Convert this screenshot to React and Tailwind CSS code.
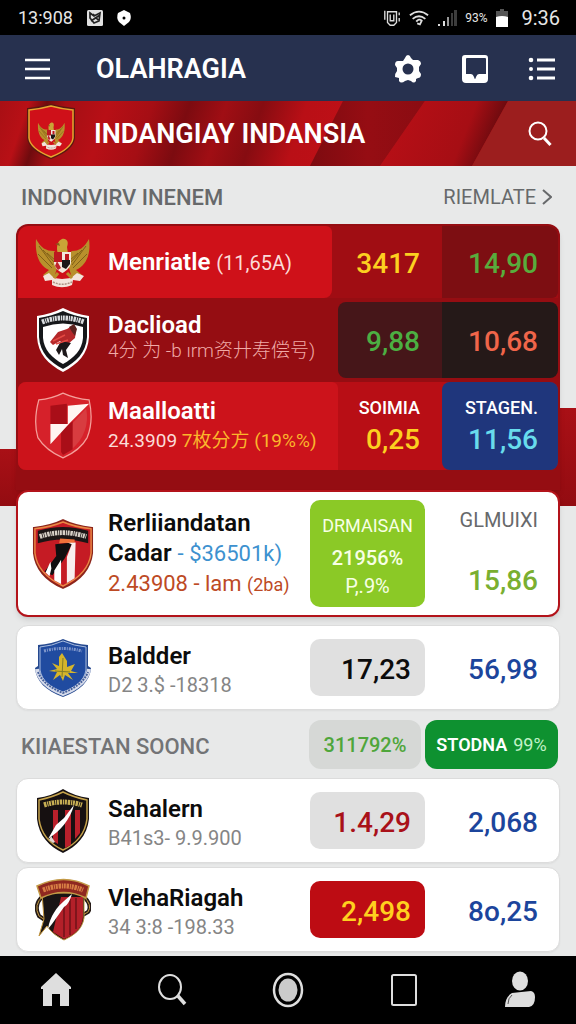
import React from 'react';

function ShieldBand({ d, color }) {
  return <path d={d} fill="none" stroke={color} strokeWidth="5" strokeDasharray="2.500 .8 1.200 .7 2 .8" />;
}

function Garuda() {
  return (
    <g>
      <path d="M2 3C1 17 4 29 15 34L9 39 20 42 23 32 35 32 38 42 48 39 42 34C53 29 57 17 55 3 50 12 45 15 38 15L34 18 24 18 20 15C12 15 7 12 2 3Z" fill="#b8902c" />
      <path d="M5 10L19 29M9 14L21 27M13 17L22 25M4 18L18 32M52 10L38 29M48 14L36 27M44 17L35 25M53 18L39 32" stroke="#806018" strokeWidth="1" fill="none" />
      <path d="M24 18C22 12 23 5 28 3 33 2 35 6 33 11L34 18Z" fill="#c9a437" />
      <path d="M25 7L21 8 26 10Z" fill="#82611d" />
      <path d="M20 16H37V27C36 32 32 35 28.500 37 24 35 21 32 20 27Z" fill="#f2e8dc" />
      <path d="M20 16H28V26H20ZM31 18H35V24H31Z" fill="#bd1820" />
      <path d="M28 24H36V28L32 33 28 31Z" fill="#1b1717" />
      <path d="M23 25L27 32 24 34 21 30Z" fill="#be242a" />
      <path d="M9 40L15 37 20 42 28 43 37 42 43 37 50 40 46 45 39 44 38 49C31 52 25 52 18 49L18 44 11 45Z" fill="#f3e4db" />
      <path d="M19 46C25 49 32 49 38 46" stroke="#ac9284" strokeWidth="1.500" fill="none" strokeDasharray="2 1" />
      <path d="M24 37L20 42M33 37L38 42" stroke="#b8902c" strokeWidth="3" />
    </g>
  );
}

function GarudaLogo() {
  return <svg viewBox="0 0 58 52" className="h-[52px] w-[58px]" aria-hidden="true"><Garuda /></svg>;
}

function BannerCrest() {
  return (
    <svg viewBox="0 0 50 56" className="mb-1 h-14 w-[50px]" aria-hidden="true">
      <path d="M2 5Q14 4 25 1 36 4 48 5V34C47 44 36 50 25 54 14 50 3 44 2 34Z" fill="#cf1019" stroke="#5a1810" strokeWidth="2" />
      <path d="M3 6Q14 5 25 2 36 5 47 6V34C46 43 35 49 25 53 15 49 4 43 3 34Z" fill="none" stroke="#e6a62f" strokeWidth="1.500" />
      <g transform="translate(11 17) scale(.5 .56)"><Garuda /></g>
    </svg>
  );
}

function EagleShield() {
  return (
    <svg viewBox="0 0 54 66" preserveAspectRatio="none" className="h-[66px] w-[54px]" aria-hidden="true">
      <path d="M1 9Q15 7 27 1 39 7 53 9V30C52 47 42 57 27 65 12 57 2 47 1 30Z" fill="#fff" />
      <path d="M3 11Q16 9 27 4 38 9 51 11V30C50 46 40 55 27 62 14 55 4 46 3 30Z" fill="#15171a" />
      <path d="M7 20Q27 13 47 20V31C46 43 38 51 27 57 16 51 8 43 7 31Z" fill="#fff" />
      <ShieldBand d="M6 15Q27 7 48 15" color="#d9dcdf" />
      <path d="M14 35L22 25 31 22 36 19 40 23 39 31 32 37 24 34 17 38Z" fill="#b5282a" />
      <path d="M33 20L38 17 41 22 39 29 36 25Z" fill="#5d2320" />
      <path d="M25 34L35 36 30 43 32 51 27 48 26 42 23 48 20 43Z" fill="#1c1719" />
      <path d="M17 34L29 28M20 37L32 33" stroke="#e44a43" strokeWidth="1.500" />
    </svg>
  );
}

function CheckShield() {
  return (
    <svg viewBox="0 0 60 70" className="h-[70px] w-[60px]" aria-hidden="true">
      <path d="M5 8Q18 7 30 1 43 7 57 8 62 30 55 47 48 60 30 68 12 60 4 47-1 30 5 8Z" fill="#d6212a" stroke="#f4a09b" strokeWidth="1.300" />
      <path d="M38 34L54 17C57 33 52 49 38 60Z" fill="#d83c40" />
      <path d="M28 40L40 30V59L30 65 28 62Z" fill="#a90e18" />
      <path d="M17 14L34 12V33H17Z" fill="#a90e18" />
      <path d="M35 14L57 12 37 32 17 54V33H35Z" fill="#fff5f2" />
    </svg>
  );
}

function StripeShield() {
  return (
    <svg viewBox="0 0 64 74" className="h-[74px] w-16" aria-hidden="true">
      <path d="M2 10Q20 8 32 2 44 8 62 10V36C60 54 48 65 32 72 16 65 4 54 2 36Z" fill="#c51b24" stroke="#8c251b" strokeWidth="2" />
      <path d="M3 11Q20 9 32 4 44 9 61 11V36C59 53 47 63 32 70 17 63 5 53 3 36Z" fill="none" stroke="#e98945" strokeWidth="1.500" />
      <path d="M6 13Q32 5 58 13V26Q32 18 6 26Z" fill="#1b1515" />
      <ShieldBand d="M8 19Q32 11 56 19" color="#d8d1c8" />
      <path d="M24 27L42 25 34 41 21 59 13 55 25 39Z" fill="#100f10" />
      <path d="M34 24L45 25 44 62 36 67V40L41 27Z" fill="#f8eeee" />
      <path d="M30 43V68L23 64V54ZM19 45L14 56 18 60 20 52Z" fill="#fff" />
      <path d="M29 21L44 22 44 25 28 26Z" fill="#ef713a" />
    </svg>
  );
}

function BlueCrest() {
  return (
    <svg viewBox="0 0 58 60" className="h-[60px] w-[58px]" aria-hidden="true">
      <path d="M4 7Q18 6 29 1 40 6 54 7V28L57 30C56 43 46 53 29 59 12 53 2 43 1 30L4 28Z" fill="#24488f" />
      <path d="M6 9Q18 8 29 3 40 8 52 9V32C50 43 42 49 29 54 16 49 8 43 6 32Z" fill="#204ba0" stroke="#a9bde0" strokeWidth="1" />
      <path d="M3 31C5 44 16 51 29 56 42 51 53 44 55 31" fill="none" stroke="#d7dceb" strokeWidth="4" />
      <path d="M4 34C8 44 17 50 29 55 41 50 50 44 54 34" fill="none" stroke="#47619b" strokeWidth="2" strokeDasharray="2 1" />
      <path d="M10 13Q29 8 48 13" fill="none" stroke="#8097cb" strokeWidth="3" strokeDasharray="2 1 1 1" />
      <path d="M28 15L33 23 33 29 41 26 37 33 44 35 34 35 39 42 31 37 29 43 26 37 19 42 23 34 15 33 23 31 18 25 25 28 25 19Z" fill="#d5b52b" />
      <path d="M29 20L28 39M21 33L36 34" stroke="#817c28" strokeWidth="1" />
    </svg>
  );
}

function DarkShield() {
  return (
    <svg viewBox="0 0 54 66" preserveAspectRatio="none" className="h-[66px] w-[54px]" aria-hidden="true">
      <path d="M1 10Q16 8 27 1 38 8 53 10V31C51 48 41 58 27 65 13 58 3 48 1 31Z" fill="#171112" />
      <path d="M3 12Q17 9 27 4 37 9 51 12V31C49 46 40 56 27 62 14 56 5 46 3 31Z" fill="#161011" stroke="#c5a34b" strokeWidth="1.500" />
      <path d="M17 22H22V56L17 53ZM29 22H35V57L29 60ZM39 22H44V45L39 51Z" fill="#b9202b" />
      <ShieldBand d="M8 17Q27 11 46 17" color="#c7ae54" />
      <path d="M38 17C34 32 24 43 12 51L20 37 28 30Z" fill="#fff" />
      <path d="M15 48L19 54 17 55 13 52Z" fill="#e4d9d2" />
    </svg>
  );
}

function RibbonShield() {
  return (
    <svg viewBox="0 0 56 64" className="h-16 w-14" aria-hidden="true">
      <path d="M8 18Q-2 27 4 38L10 42M48 18Q58 27 53 34L46 38" fill="none" stroke="#251b17" strokeWidth="4" />
      <path d="M8 18Q-2 27 4 38L10 42M48 18Q58 27 53 34L46 38" fill="none" stroke="#c49a43" strokeWidth="1" />
      <path d="M7 15H49V40C47 52 39 57 29 62 21 58 15 53 12 48L4 58 9 41Z" fill="#191414" stroke="#c1933c" strokeWidth="1" />
      <path d="M26 19H48V39C47 51 39 57 29 61L18 54Z" fill="#b42029" />
      <path d="M29 24V59M35 21V57M41 20V51" stroke="#80151c" strokeWidth="2" />
      <path d="M2 8Q29-5 54 8L51 20Q29 9 6 20Z" fill="#8f2820" stroke="#c39a47" strokeWidth="1.500" />
      <ShieldBand d="M8 12Q29 4 48 12" color="#d77e44" />
      <path d="M37 16C35 22 33 27 29 29L17 46 13 51C15 38 22 29 29 23Z" fill="#fff" />
    </svg>
  );
}

function StatusBar() {
  return (
    <div className="flex h-[35px] items-center justify-between bg-black pr-4 pl-[18px] text-[#e6e6e6]">
      <div className="flex items-center gap-3">
        <span className="w-14 text-lg leading-6">13:908</span>
        <svg viewBox="0 0 18 18" className="size-[18px]" aria-hidden="true">
          <rect x="1" y="1" width="16" height="16" rx="1.500" fill="#e1e1e1" />
          <path d="M4 4L8 7 14 4 13 12 8 14 4 9ZM7 5L12 11M5 12L14 6" fill="none" stroke="#222" strokeWidth="1.700" />
        </svg>
        <svg viewBox="0 0 16 18" className="h-[18px] w-4" aria-hidden="true">
          <path d="M8 1L14 4Q16 10 13 13L8 17 3 13Q0 9 2 4Z" fill="#fff" /><circle cx="8" cy="9" r="1.500" />
        </svg>
      </div>
      <div className="flex items-center gap-2">
        <svg viewBox="0 0 20 20" className="size-[18px]" fill="none" stroke="#ddd" strokeWidth="1.500" aria-hidden="true">
          <path d="M2 2V12M5 3H15V15L12 18H8L5 15ZM8 6V13H12V6M18 4V7M18 10V14" />
        </svg>
        <svg viewBox="0 0 22 18" className="h-[18px] w-5" fill="none" stroke="#ddd" strokeWidth="2" aria-hidden="true">
          <path d="M1 6Q11-2 21 6M4 10Q11 4 18 10M8 13Q11 9 14 12L12 16 9 15" />
        </svg>
        <svg viewBox="0 0 20 18" className="h-[18px] w-5" aria-hidden="true">
          <path d="M1 15H3V17H1ZM6 12H8V17H6Z" fill="#ddd" /><path d="M10 8H12V17H10Z" fill="#999" /><path d="M14 4H16V17H14ZM17 1H20V17H17Z" fill="#3d3d3d" />
        </svg>
        <span className="text-xs">93%</span>
        <svg viewBox="0 0 14 20" className="h-5 w-3.5" aria-hidden="true">
          <path d="M5 1H9V3H13V10H1V3H5Z" fill="#555" /><path d="M1 9Q7 7 13 9V19H1Z" fill="#fff" />
        </svg>
        <span className="ml-1 text-xl leading-6">9:36</span>
      </div>
    </div>
  );
}

function AppHeader() {
  return (
    <header className="flex h-[66px] items-center bg-[#27314f] pt-0.5 pr-5 pl-6 text-white">
      <button aria-label="Menu" className="w-[72px]">
        <svg viewBox="0 0 26 22" className="h-[22px] w-[26px]" stroke="currentColor" strokeWidth="2.600" aria-hidden="true"><path d="M1 2H26M1 11H26M1 20H26" /></svg>
      </button>
      <h1 className="flex-1 text-[27px] leading-8 font-semibold">OLAHRAGIA</h1>
      <div className="flex items-center gap-[39px]">
        <button aria-label="Pengaturan">
          <svg viewBox="0 0 28 30" className="h-[30px] w-7" aria-hidden="true">
            <path fillRule="evenodd" fill="currentColor" d="M14 1Q16 1 17 4L19 6H24Q27 7 27 10L25 13V17L27 20Q27 24 24 24L22 25V27Q20 30 17 27L14 26 11 27Q7 30 5 27V24L1 23Q1 19 3 17V14L1 11Q1 7 4 7H9L11 4Q12 1 14 1ZM14 9.500A5.500 5.500 0 1 0 14 20.500 5.500 5.500 0 1 0 14 9.500Z" />
          </svg>
        </button>
        <button aria-label="Kotak masuk">
          <svg viewBox="0 0 28 30" className="h-[30px] w-7" aria-hidden="true">
            <path fillRule="evenodd" fill="currentColor" d="M4 1H24Q27 1 27 4V25Q27 29 23 29H5Q1 29 1 25V4Q1 1 4 1ZM6 4Q5 4 5 5V20H10Q12 20 13 23 14 27 15 23 16 20 18 20H25V5Q25 4 24 4Z" />
          </svg>
        </button>
        <button aria-label="Daftar">
          <svg viewBox="0 0 28 24" className="h-6 w-7" fill="currentColor" aria-hidden="true">
            <circle cx="3" cy="3" r="2.300" /><circle cx="3" cy="12" r="2" /><circle cx="3" cy="21" r="2.300" /><path d="M9 1.500H27V4.500H9ZM9 10.500H27V13.500H9ZM9 19.500H27V22.500H9Z" />
          </svg>
        </button>
      </div>
    </header>
  );
}

function Banner() {
  return (
    <section className="relative h-[65px] overflow-hidden bg-[#a90f14] text-white">
      <svg viewBox="0 0 576 65" preserveAspectRatio="none" className="absolute inset-0 size-full" aria-hidden="true">
        <defs>
          <linearGradient id="cloth" gradientUnits="userSpaceOnUse" x1="0" y1="0" x2="330" y2="110">
            <stop stopColor="#a80f14" /><stop offset=".08" stopColor="#b81016" /><stop offset=".13" stopColor="#6f0b0e" /><stop offset=".18" stopColor="#a30f14" />
            <stop offset=".3" stopColor="#b80f16" /><stop offset=".42" stopColor="#a50e14" /><stop offset=".52" stopColor="#7c0b10" /><stop offset=".62" stopColor="#a00e14" />
            <stop offset=".72" stopColor="#860c11" /><stop offset=".84" stopColor="#b90f16" /><stop offset="1" stopColor="#c01017" />
          </linearGradient>
          <linearGradient id="fold"><stop stopColor="#7d0b10" /><stop offset=".5" stopColor="#960d13" /><stop offset="1" stopColor="#8a0c12" /></linearGradient>
          <linearGradient id="glow" gradientUnits="userSpaceOnUse" x1="390" y1="0" x2="495" y2="42"><stop stopColor="#b90f16" /><stop offset=".72" stopColor="#a60e14" /><stop offset="1" stopColor="#650a0e" /></linearGradient>
        </defs>
        <path d="M0 0H343L310 65H0Z" fill="url(#cloth)" />
        <path d="M343 0H425L380 65H310Z" fill="url(#fold)" />
        <path d="M425 0H508L472 65H380Z" fill="url(#glow)" />
        <path d="M508 0H576V65H472Z" fill="#9c1e1e" />
      </svg>
      <div className="relative flex h-full items-center pr-6 pl-[26px]">
        <BannerCrest />
        <h2 className="ml-[18px] flex-1 text-[27px] leading-8 font-semibold whitespace-nowrap">INDANGIAY INDANSIA</h2>
        <button aria-label="Cari">
          <svg viewBox="0 0 24 26" className="h-[26px] w-6" fill="none" stroke="currentColor" aria-hidden="true"><circle cx="10" cy="10" r="8.500" strokeWidth="2" /><path d="M16 17L22.500 24" strokeWidth="3" /></svg>
        </button>
      </div>
    </section>
  );
}

const rowText = 'min-w-0 flex-1 whitespace-nowrap';
const logoBox = 'flex w-[58px] shrink-0 items-center justify-center';
const redRow = 'grid grid-cols-[minmax(0,1fr)_104px_116px]';
const redCell = 'flex items-center justify-end pt-1 text-[28px] font-medium';

function RedBoard() {
  return (
    <ul className="flex flex-col gap-1 rounded-t-xl bg-[#950d12] px-0.5 pt-0.5 pb-5 text-white shadow-md">
      <li className={`${redRow} h-[72px] rounded-t-[10px] bg-[#a00d13]`}>
        <div className="mr-1.5 flex items-center gap-4 rounded-tl-[10px] rounded-tr-md rounded-br-lg bg-[#cf1119] pl-4">
          <div className={logoBox}><GarudaLogo /></div>
          <p className={`${rowText} text-2xl font-semibold`}>Menriatle <span className="text-xl font-normal text-[#fbdcd8]">(11,65A)</span></p>
        </div>
        <div className={`${redCell} pr-[22px] text-[#fcd020]`}>3417</div>
        <div className={`${redCell} rounded-tr-[10px] rounded-br-md bg-[#7d0e12] pr-5 text-[#58ac3c]`}>14,90</div>
      </li>
      <li className={`${redRow} h-[76px]`}>
        <div className="flex items-center gap-4 pl-4">
          <div className={logoBox}><EagleShield /></div>
          <div className={`${rowText} pb-1.5`}>
            <p className="text-2xl leading-7 font-semibold">Daclioad</p>
            <p className="text-[19px] leading-6 font-light text-[#f0aaa7]">4分 为 -b ırm资廾寿偿号)</p>
          </div>
        </div>
        <div className={`${redCell} rounded-l-lg bg-[#461619] pr-[22px] text-[#4caf42]`}>9,88</div>
        <div className={`${redCell} rounded-r-lg bg-[#251918] pr-5 text-[#f0654a]`}>10,68</div>
      </li>
      <li className={`${redRow} h-[88px] rounded-lg bg-[#b80e15]`}>
        <div className="flex items-center gap-4 rounded-l-lg rounded-tr-md bg-[#cc131b] pl-4">
          <div className={logoBox}><CheckShield /></div>
          <div className={rowText}>
            <p className="text-2xl leading-[30px] font-semibold">Maalloatti</p>
            <p className="text-[19px] leading-[30px] text-[#fbdcd8]">24.3909 <span className="text-[#fbb62b]">7枚分方 (19%%)</span></p>
          </div>
        </div>
        <div className="flex flex-col items-end justify-center pr-[22px]">
          <span className="text-lg leading-7 font-medium">SOIMIA</span>
          <span className="text-[28px] leading-9 font-medium text-[#fcd020]">0,25</span>
        </div>
        <div className="flex flex-col items-end justify-center rounded-lg bg-[#1f367c] pr-5">
          <span className="text-lg leading-7 font-medium">STAGEN.</span>
          <span className="text-[28px] leading-9 font-medium text-[#68dcec]">11,56</span>
        </div>
      </li>
    </ul>
  );
}

function FeaturedCard() {
  return (
    <article className="flex h-[127px] rounded-xl border-2 border-[#b3131a] bg-white pr-5 pl-3.5 shadow-md">
      <div className="flex min-w-0 flex-1 items-center gap-3.5">
        <div className="flex w-[62px] shrink-0 justify-center"><StripeShield /></div>
        <div className={rowText}>
          <p className="text-2xl leading-[30px] font-semibold text-[#0c0c0c]">Rerliiandatan</p>
          <p className="text-2xl leading-[30px] font-semibold text-[#0c0c0c]">Cadar <span className="text-[22px] font-normal text-[#3d91cf]">- $36501k)</span></p>
          <p className="text-[22px] leading-[30px] text-[#bd4a24]">2.43908 - lam <span className="text-lg">(2ba)</span></p>
        </div>
      </div>
      <div className="my-2 flex w-[115px] shrink-0 flex-col items-center justify-center rounded-[10px] bg-[#8bc926] text-[#f7ffe5]">
        <span className="text-lg leading-7">DRMAISAN</span>
        <span className="text-xl leading-9 font-medium">21956%</span>
        <span className="text-xl leading-5">P,.9%</span>
      </div>
      <div className="flex w-[113px] shrink-0 flex-col items-end justify-between pt-3.5 pb-3.5">
        <span className="text-xl leading-7 text-[#67696b]">GLMUIXI</span>
        <span className="text-[28px] leading-10 font-medium text-[#7aaf30]">15,86</span>
      </div>
    </article>
  );
}

function ClubCard({ logo, name, detail, score, scoreClass, total }) {
  return (
    <article className="flex h-[85px] items-center rounded-xl border border-[#dcdcdc] bg-white pr-[21px] pl-[17px] shadow-xs">
      <div className="flex min-w-0 flex-1 items-center gap-4">
        <div className={logoBox}>{logo}</div>
        <div className={`${rowText} pt-1`}>
          <p className="text-2xl leading-[30px] font-semibold text-[#0c0c0c]">{name}</p>
          <p className="text-xl leading-7 text-[#858585]">{detail}</p>
        </div>
      </div>
      <div className={`flex h-[57px] w-[115px] shrink-0 items-center justify-end rounded-[10px] pt-1 pr-3.5 text-[28px] font-medium ${scoreClass}`}>{score}</div>
      <div className="w-[113px] shrink-0 pt-1 text-right text-[28px] font-medium text-[#1c459c]">{total}</div>
    </article>
  );
}

function BottomNav() {
  const item = 'flex w-12 justify-center';
  return (
    <nav className="mt-auto flex h-[68px] items-center justify-between bg-black px-8 text-[#dedede]" aria-label="Navigasi utama">
      <button aria-label="Beranda" className={item}><svg viewBox="0 0 30 34" className="h-[34px] w-[30px]" fill="currentColor" aria-hidden="true"><path d="M15 0L30 14V16H28V33H19V21H11V33H2V16H0V14Z" /></svg></button>
      <button aria-label="Cari" className={item}><svg viewBox="0 0 30 34" className="h-[34px] w-[30px]" fill="none" stroke="currentColor" aria-hidden="true"><ellipse cx="13" cy="14" rx="11" ry="12" strokeWidth="2" /><path d="M21 23L28 31" strokeWidth="3.500" /></svg></button>
      <button aria-label="Mulai" className={item}><svg viewBox="0 0 32 36" className="h-9 w-8" aria-hidden="true"><ellipse cx="16" cy="18" rx="14" ry="16" fill="none" stroke="currentColor" strokeWidth="2.500" /><ellipse cx="16" cy="18" rx="9.500" ry="11.500" fill="#cbcbcb" /></svg></button>
      <button aria-label="Aplikasi terbuka" className={item}><svg viewBox="0 0 26 32" className="h-8 w-[26px]" fill="none" stroke="currentColor" aria-hidden="true"><rect x="1" y="1" width="24" height="30" rx="1.500" strokeWidth="2" /></svg></button>
      <button aria-label="Profil" className={item}><svg viewBox="0 0 32 38" className="h-[38px] w-8" fill="currentColor" aria-hidden="true"><ellipse cx="16" cy="10" rx="8" ry="9.500" /><path d="M8 22Q17 21 27 20Q31 21 31 26Q31 35 25 36H1Q1 26 8 22Z" /><path d="M4 33Q4 27 8 24" fill="none" stroke="#555" strokeWidth="1" /></svg></button>
    </nav>
  );
}

export default function App() {
  return (
    <div className="flex min-h-screen flex-col bg-[#e8e9e9] font-[Roboto,'Noto_Sans_CJK_SC',sans-serif]">
      <StatusBar />
      <AppHeader />
      <Banner />
      <main>
        <div className="flex h-[58px] items-center justify-between pt-1 pr-6 pl-[21px] text-[#67696b]">
          <h3 className="text-[22px] font-medium">INDONVIRV INENEM</h3>
          <a href="#semua" className="flex items-center gap-1.5 text-xl">
            RIEMLATE
            <svg viewBox="0 0 10 16" className="h-4 w-2.5" fill="none" stroke="currentColor" strokeWidth="2" aria-hidden="true"><path d="M1 1L9 8 1 15" /></svg>
          </a>
        </div>
        <div className="bg-[linear-gradient(#a91016,#930c11),linear-gradient(#a91016,#930c11)] bg-[length:50%_57px,50%_98px] bg-[position:0_225px,100%_184px] bg-no-repeat px-4">
          <RedBoard />
          <FeaturedCard />
        </div>
        <div className="px-4 pt-2">
          <ClubCard logo={<BlueCrest />} name="Baldder" detail="D2 3.$ -18318" score="17,23" scoreClass="bg-[#e0e0e0] text-[#0c0c0c]" total="56,98" />
        </div>
        <div className="flex items-center gap-1 pt-2.5 pr-[18px] pb-[9px] pl-[21px]">
          <h3 className="flex-1 pt-1 text-[22px] font-medium whitespace-nowrap text-[#737476]">KIIAESTAN SOONC</h3>
          <span className="flex h-[49px] w-28 items-center justify-center rounded-xl bg-[#d6d8d6] text-xl font-medium text-[#4fa63b]">311792%</span>
          <button className="flex h-[49px] w-[133px] items-center justify-center gap-1.5 rounded-xl bg-[#0e9130] text-lg font-semibold text-white">STODNA <span className="font-normal text-[#c2f2c8]">99%</span></button>
        </div>
        <div className="flex flex-col gap-1 px-4 pb-1">
          <ClubCard logo={<DarkShield />} name="Sahalern" detail="B41s3- 9.9.900" score="1.4,29" scoreClass="bg-[#e0e0e0] text-[#a91119]" total="2,068" />
          <ClubCard logo={<RibbonShield />} name="VlehaRiagah" detail="34 3:8 -198.33" score="2,498" scoreClass="bg-[#bd0c13] text-[#ffd01f]" total="8o,25" />
        </div>
      </main>
      <BottomNav />
    </div>
  );
}
